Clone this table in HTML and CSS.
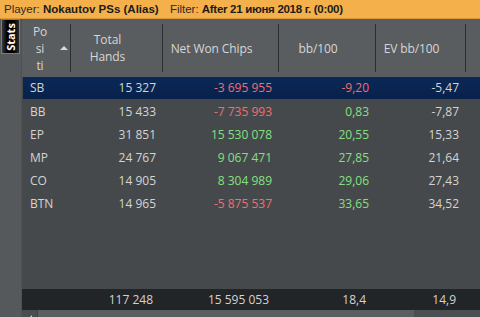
FILE: index.html
```html
<!DOCTYPE html>
<html>
<head>
<meta charset="utf-8">
<link rel="stylesheet" href="styles.css">
</head>
<body>
<div class="app">
  <div class="titlebar">
    <span class="lbl">Player:</span> <b class="name">Nokautov PSs (Alias)</b>
    <span class="lbl filter">Filter:</span> <b class="fval">After 21 июня 2018 г. (0:00)</b>
  </div>
  <div class="main">
    <div class="sidebar">
      <div class="tab"><span>Stats</span></div>
    </div>
    <div class="grid">
      <div class="head row">
        <div class="hc pos"><span class="ptxt">Po<br>si<br>ti</span><span class="arrow"></span></div>
        <div class="hc"><span>Total<br>Hands</span></div>
        <div class="hc"><span>Net Won Chips</span></div>
        <div class="hc"><span>bb/100</span></div>
        <div class="hc"><span>EV bb/100</span></div>
        <div class="hc last"></div>
      </div>
      <div class="body">
        <div class="row data sel">
          <div class="c l">SB</div><div class="c">15 327</div><div class="c red">-3 695 955</div><div class="c red">-9,20</div><div class="c">-5,47</div><div class="c"></div>
        </div>
        <div class="row data">
          <div class="c l">BB</div><div class="c">15 433</div><div class="c red">-7 735 993</div><div class="c grn">0,83</div><div class="c">-7,87</div><div class="c"></div>
        </div>
        <div class="row data">
          <div class="c l">EP</div><div class="c">31 851</div><div class="c grn">15 530 078</div><div class="c grn">20,55</div><div class="c">15,33</div><div class="c"></div>
        </div>
        <div class="row data">
          <div class="c l">MP</div><div class="c">24 767</div><div class="c grn">9 067 471</div><div class="c grn">27,85</div><div class="c">21,64</div><div class="c"></div>
        </div>
        <div class="row data">
          <div class="c l">CO</div><div class="c">14 905</div><div class="c grn">8 304 989</div><div class="c grn">29,06</div><div class="c">27,43</div><div class="c"></div>
        </div>
        <div class="row data">
          <div class="c l">BTN</div><div class="c">14 965</div><div class="c red">-5 875 537</div><div class="c grn">33,65</div><div class="c">34,52</div><div class="c"></div>
        </div>
      </div>
      <div class="row foot">
        <div class="f"></div><div class="f">117 248</div><div class="f">15 595 053</div><div class="f">18,4</div><div class="f">14,9</div><div class="f"></div>
      </div>
      <div class="scroll">
        <div class="sbtn"><span class="larr"></span></div>
        <div class="thumb"></div>
        <div class="track"></div>
      </div>
    </div>
  </div>
</div>
</body>
</html>
```
FILE: styles.css
```css
* { box-sizing: border-box; }
html, body { margin: 0; padding: 0; }
body {
  width: 480px;
  height: 317px;
  overflow: hidden;
  background: #46494c;
  font-family: "Open Sans", "Noto Sans", "Liberation Sans", sans-serif;
}
.app {
  width: 480px;
  height: 317px;
  display: flex;
  flex-direction: column;
  overflow: hidden;
}
.titlebar {
  height: 19px;
  flex: none;
  background: #f4b04a;
  border-bottom: 1px solid #d7963a;
  color: #1b1b1b;
  font-family: "Liberation Sans", Arial, sans-serif;
  font-size: 11.5px;
  line-height: 18px;
  padding-left: 4px;
  white-space: nowrap;
}
.titlebar .lbl { color: #2a2a2a; }
.titlebar b { font-weight: 700; }
.titlebar .fval { letter-spacing: -0.3px; }
.titlebar .filter { margin-left: 8px; }
.main {
  flex: 1;
  display: flex;
  min-height: 0;
}
.sidebar {
  width: 21px;
  flex: none;
  background: #56595b;
  padding: 0 0 0 1px;
}
.tab {
  width: 19px;
  height: 35px;
  border: 1px solid #7a7c7e;
  background: linear-gradient(to right, #3a3a3a 0%, #000 30%, #000 70%, #2a2a2a 100%);
  display: flex;
  align-items: center;
  justify-content: center;
}
.tab span {
  display: block;
  transform: rotate(-90deg);
  color: #fff;
  font-size: 11px;
  font-weight: 700;
  line-height: 12px;
}
.grid {
  flex: 1;
  display: flex;
  flex-direction: column;
  min-width: 0;
  border-left: 1px solid #4f5255;
}
.row {
  display: grid;
  grid-template-columns: 49px 92px 116px 97px 90px 1fr;
}
.head {
  height: 58px;
  flex: none;
  background: #5a5d60;
  color: #d6d6d6;
  font-size: 12px;
  letter-spacing: -0.1px;
  line-height: 17px;
}
.hc {
  position: relative;
  display: flex;
  align-items: center;
  justify-content: center;
  padding-right: 19px;
  text-align: center;
}
.hc::after {
  content: "";
  position: absolute;
  right: 0;
  top: 5px;
  bottom: 5px;
  width: 1px;
  background: #2c2e30;
}
.hc.last::after { display: none; }
.hc.pos { padding-right: 0; justify-content: flex-start; padding-left: 9px; }
.ptxt { display: block; width: 18px; text-align: center; line-height: 17px; }
.arrow {
  width: 0; height: 0;
  margin-left: 11px;
  border-left: 4px solid transparent;
  border-right: 4px solid transparent;
  border-bottom: 4px solid #d8d8d8;
}
.body {
  height: 212px;
  flex: none;
  background: #46494c;
  padding-left: 1px;
}
.data {
  height: 23px;
  color: #d4d4d4;
  font-size: 12px;
  line-height: 23px;
}
.data.sel {
  background: linear-gradient(to bottom, #0b2856 0%, #08214b 100%);
  height: 22px;
  line-height: 22px;
  margin-bottom: 1px;
}
.c {
  text-align: right;
  padding-right: 8px;
  white-space: nowrap;
}
.c.l { text-align: left; padding-left: 7px; padding-right: 0; }
.red { color: #f16e6e; }
.grn { color: #84e07f; }
.foot {
  height: 21px;
  flex: none;
  background: #222528;
  color: #d2d2d2;
  font-size: 12px;
  line-height: 21px;
}
.f {
  text-align: right;
  padding-right: 10px;
  white-space: nowrap;
}
.scroll {
  height: 17px;
  flex: none;
  display: flex;
  background: #4a4d50;
}
.sbtn {
  width: 16px;
  border-right: 1px solid #3e4143;
  display: flex;
  align-items: center;
  justify-content: center;
}
.larr {
  width: 0; height: 0;
  border-top: 4px solid transparent;
  border-bottom: 4px solid transparent;
  border-right: 4px solid #c8c8c8;
}
.thumb {
  width: 376px;
  background: #5b5e61;
}
.track { flex: 1; background: #4b4e51; }
```
